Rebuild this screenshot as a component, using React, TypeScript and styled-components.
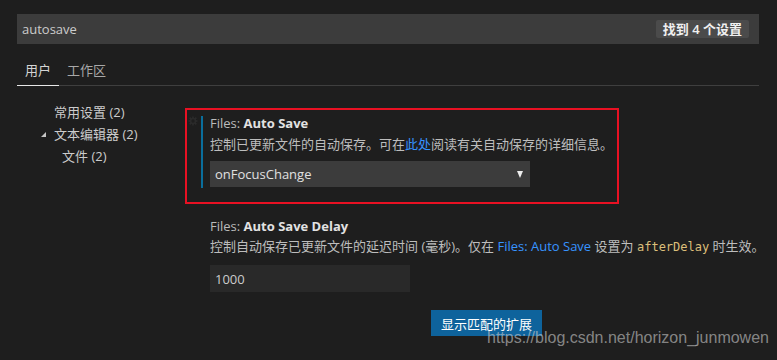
import React from "react";
import styled, { createGlobalStyle } from "styled-components";

const Global = createGlobalStyle`
  html, body { margin: 0; padding: 0; background: #1e1e1e; }
  body {
    font-family: "Open Sans", "Noto Sans CJK SC", sans-serif;
    font-size: 13px;
    color: #cccccc;
    overflow: hidden;
  }
`;

const Page = styled.div`
  position: relative;
  width: 777px;
  height: 360px;
  padding: 14px 18px 0 17px;
  box-sizing: border-box;
`;

const SearchBar = styled.div`
  height: 30px;
  background: #3c3c3c;
  display: flex;
  align-items: center;
  justify-content: space-between;
  padding: 0 10px 0 5px;
`;

const SearchText = styled.span`
  color: #cccccc;
  font-size: 13px;
`;

const Badge = styled.span`
  height: 18px;
  line-height: 18px;
  padding: 0 7px;
  background: #4b4b4b;
  color: #f0f0f0;
  font-size: 13px;
  font-weight: 600;
  border-radius: 2px;
`;

const TabBar = styled.div`
  margin-top: 14px;
  display: flex;
  border-bottom: 1px solid #3f3f3f;
`;

const Tab = styled.div<{ $active?: boolean }>`
  padding: 4px 8px 7px;
  line-height: 16px;
  font-size: 13px;
  color: ${(p) => (p.$active ? "#d4d4d4" : "#a8a8a8")};
  border-bottom: 1px solid ${(p) => (p.$active ? "#e7e7e7" : "transparent")};
  margin-bottom: -1px;
`;

const Body = styled.div`
  display: flex;
`;

const Tree = styled.div`
  width: 168px;
  flex-shrink: 0;
  margin-top: 15px;
  display: flex;
  flex-direction: column;
`;

const TreeItem = styled.div<{ $indent: number }>`
  position: relative;
  height: 22px;
  line-height: 22px;
  padding-left: ${(p) => p.$indent}px;
  color: #cccccc;
  white-space: nowrap;
`;

const Twistie = styled.span`
  position: absolute;
  left: 24px;
  top: 9px;
  width: 0;
  height: 0;
  border-left: 5px solid transparent;
  border-bottom: 5px solid #c5c5c5;
`;

const Content = styled.div`
  margin-top: 22px;
  display: flex;
  flex-direction: column;
  align-items: flex-start;
`;

const Highlight = styled.div`
  width: 434px;
  height: 96px;
  box-sizing: border-box;
  border: 2px solid #e81123;
  padding: 6px 0 0 14px;
  position: relative;
`;

const Gear = styled.svg`
  position: absolute;
  left: 1px;
  top: 6px;
`;

const Setting = styled.div<{ $focused?: boolean }>`
  border-left: 2px solid ${(p) => (p.$focused ? "#0a6e9c" : "transparent")};
  padding: 0 0 1px 7px;
`;

const Plain = styled.div`
  padding-left: 25px;
  margin-top: 15px;
`;

const Title = styled.div`
  line-height: 14px;
  font-size: 13px;
  color: #bbbbbb;
  white-space: nowrap;
  b {
    color: #e2e2e2;
    font-weight: 700;
  }
`;

const Desc = styled.div<{ $gap: number }>`
  margin-top: ${(p) => p.$gap}px;
  line-height: 20px;
  color: #bdbdbd;
  white-space: nowrap;
`;

const Link = styled.span`
  color: #3794ff;
`;

const Code = styled.span`
  font-family: "DejaVu Sans Mono", "Liberation Mono", monospace;
  font-size: 12px;
  color: #dcbf7a;
`;

const Select = styled.div`
  margin-top: 7px;
  width: 320px;
  height: 26px;
  background: #3c3c3c;
  display: flex;
  align-items: center;
  justify-content: space-between;
  padding: 0 7px 0 5px;
  box-sizing: border-box;
  color: #e0e0e0;
`;

const Arrow = styled.span`
  width: 0;
  height: 0;
  border-left: 3.5px solid transparent;
  border-right: 3.5px solid transparent;
  border-top: 7px solid #eeeeee;
  margin-top: 1px;
`;

const NumberInput = styled.div`
  margin-top: 8px;
  width: 200px;
  height: 27px;
  background: #292929;
  display: flex;
  align-items: center;
  padding-left: 5px;
  box-sizing: border-box;
  color: #cccccc;
`;

const Button = styled.div`
  margin: 18px 0 0 246px;
  width: 111px;
  height: 26px;
  background: #0e639c;
  color: #ffffff;
  display: flex;
  align-items: center;
  justify-content: center;
  font-size: 13px;
`;

const Watermark = styled.div`
  position: absolute;
  left: 487px;
  top: 329px;
  font-family: "Liberation Sans", Arial, sans-serif;
  font-size: 16px;
  line-height: 18px;
  color: rgba(200, 200, 200, 0.62);
  white-space: nowrap;
`;

export default function App() {
  return (
    <>
      <Global />
      <Page>
        <SearchBar>
          <SearchText>autosave</SearchText>
          <Badge>找到 4 个设置</Badge>
        </SearchBar>
        <TabBar>
          <Tab $active>用户</Tab>
          <Tab>工作区</Tab>
        </TabBar>
        <Body>
          <Tree>
            <TreeItem $indent={37}>常用设置 (2)</TreeItem>
            <TreeItem $indent={37}>
              <Twistie />
              文本编辑器 (2)
            </TreeItem>
            <TreeItem $indent={45}>文件 (2)</TreeItem>
          </Tree>
          <Content>
            <Highlight>
              <Gear width="10" height="10" viewBox="0 0 24 24" fill="none" stroke="#2b2b2b" strokeWidth="4">
                <circle cx="12" cy="12" r="6" />
                <path d="M12 1v5M12 18v5M1 12h5M18 12h5M4 4l3.5 3.5M16.5 16.5L20 20M4 20l3.5-3.5M16.5 7.5L20 4" />
              </Gear>
              <Setting $focused>
                <Title>
                  Files: <b>Auto Save</b>
                </Title>
                <Desc $gap={4}>
                  控制已更新文件的自动保存。可在<Link>此处</Link>阅读有关自动保存的详细信息。
                </Desc>
                <Select>
                  <span>onFocusChange</span>
                  <Arrow />
                </Select>
              </Setting>
            </Highlight>
            <Plain>
              <Title>
                Files: <b>Auto Save Delay</b>
              </Title>
              <Desc $gap={3}>
                控制自动保存已更新文件的延迟时间 (毫秒)。仅在 <Link>Files: Auto Save</Link> 设置为{" "}
                <Code>afterDelay</Code> 时生效。
              </Desc>
              <NumberInput>1000</NumberInput>
            </Plain>
            <Button>显示匹配的扩展</Button>
          </Content>
        </Body>
        <Watermark>https://blog.csdn.net/horizon_junmowen</Watermark>
      </Page>
    </>
  );
}
